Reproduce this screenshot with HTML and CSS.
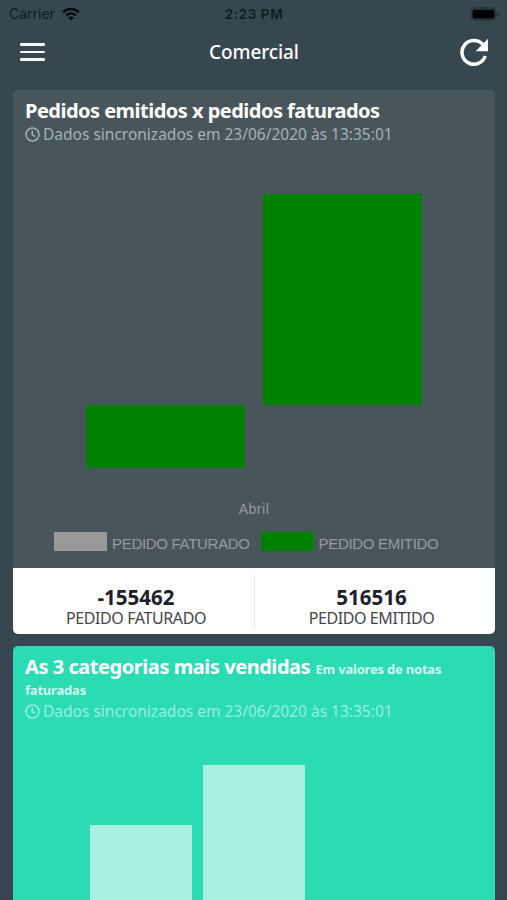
FILE: index.html
```html
<!DOCTYPE html>
<html lang="pt-BR">
<head>
	<meta charset="UTF-8">
	<title>Comercial</title>
	<link rel="stylesheet" href="styles.css">
</head>
<body>
	<div class="app">
		<div class="status">
			<div class="carrier">
				<span>Carrier</span>
				<svg width="18" height="14" viewBox="0 0 18 14">
					<path d="M1.2 5.2a11.2 11.2 0 0 1 15.6 0" fill="none" stroke="#050b0f" stroke-width="2.6"/>
					<path d="M4.2 8.3a7 7 0 0 1 9.6 0" fill="none" stroke="#050b0f" stroke-width="2.3"/>
					<path d="M9 13.6L6.3 10.8a4 4 0 0 1 5.4 0z" fill="#050b0f"/>
				</svg>
			</div>
			<b class="time">2:23 PM</b>
			<svg class="battery" width="30" height="14" viewBox="0 0 30 14">
				<rect x="0.8" y="0.8" width="25.4" height="12.4" rx="4" fill="#2f3b41" stroke="#26323a"/>
				<rect x="2.5" y="2.7" width="22" height="8.8" rx="2" fill="#000"/>
				<path d="M27.7 4.5v5q1.8-.8 1.8-2.5t-1.8-2.5z" fill="#26323a"/>
			</svg>
		</div>
		<div class="navbar">
			<a href="#" class="menu"><i></i><i></i><i></i></a>
			<h1>Comercial</h1>
			<a href="#" class="refresh">
				<svg width="28" height="28" viewBox="0 0 28 28">
					<path d="M25.2 18A11.9 11.9 0 1 1 22.6 6.2" fill="none" stroke="#fff" stroke-width="3.5"/>
					<path d="M28 .8v12.4H15.6z" fill="#fff"/>
				</svg>
			</a>
		</div>

		<div class="card card-gray">
			<div class="card-head">
				<h2><span class="t1">Pedidos emitidos x pedidos faturados</span></h2>
				<p class="sync">
					<svg width="15" height="15" viewBox="0 0 15 15" fill="none" stroke="currentColor" stroke-width="1.5">
						<circle cx="7.5" cy="7.5" r="6.5"/>
						<path d="M7.3 3.5v4.4l3 1.7"/>
					</svg>
					<span>Dados sincronizados em 23/06/2020 às 13:35:01</span>
				</p>
			</div>
			<div class="chart">
				<div class="bar faturado"></div>
				<div class="bar emitido"></div>
			</div>
			<div class="axis">Abril</div>
			<div class="legend">
				<i class="box gray"></i><span class="l1">PEDIDO FATURADO</span>
				<i class="box green"></i><span class="l2">PEDIDO EMITIDO</span>
			</div>
			<div class="totals">
				<div class="total">
					<b>-155462</b>
					<span>PEDIDO FATURADO</span>
				</div>
				<div class="total">
					<b>516516</b>
					<span>PEDIDO EMITIDO</span>
				</div>
			</div>
		</div>

		<div class="card card-teal">
			<div class="card-head">
				<h2><span class="t2">As 3 categorias mais vendidas</span> <small>Em valores de notas faturadas</small></h2>
				<p class="sync">
					<svg width="15" height="15" viewBox="0 0 15 15" fill="none" stroke="currentColor" stroke-width="1.5">
						<circle cx="7.5" cy="7.5" r="6.5"/>
						<path d="M7.3 3.5v4.4l3 1.7"/>
					</svg>
					<span>Dados sincronizados em 23/06/2020 às 13:35:01</span>
				</p>
			</div>
			<div class="chart-top">
				<div class="col first"></div>
				<div class="col second"></div>
			</div>
		</div>
	</div>
</body>
</html>
```

FILE: styles.css
```css
*{
	margin: 0;
	padding: 0;
	box-sizing: border-box;
}
body{
	background-color: #37474f;
	font-family: "Noto Sans", "Open Sans", sans-serif;
}
svg{
	display: block;
}
.app{
	height: 900px;
	overflow: hidden;
	display: flex;
	flex-direction: column;
}
.status{
	flex: none;
	height: 27px;
	padding: 0 7px 0 9px;
	display: grid;
	grid-template-columns: 1fr auto 1fr;
	align-items: center;
	font-family: Inter, "Liberation Sans", sans-serif;
	font-size: 14px;
	color: #111b21;
}
.carrier{
	display: flex;
	align-items: center;
	gap: 7px;
}
.time{
	margin-right: 1px;
	font-size: 13.5px;
	font-weight: 600;
	letter-spacing: 0.6px;
}
.battery{
	justify-self: end;
}
.navbar{
	flex: none;
	height: 63px;
	padding: 0 19px 13px 20px;
	display: grid;
	grid-template-columns: 1fr auto 1fr;
	align-items: center;
}
.navbar h1{
	font-size: 19px;
	font-weight: 500;
	letter-spacing: -0.1px;
	color: #fff;
}
.menu{
	width: 25px;
	display: flex;
	flex-direction: column;
	gap: 5px;
}
.menu i{
	height: 2.6px;
	border-radius: 1px;
	background-color: #f4f6f8;
}
.refresh{
	justify-self: end;
}
.card{
	flex: none;
	width: 482px;
	margin-left: 13px;
	border-radius: 5px;
	overflow: hidden;
}
.card-gray{
	height: 544px;
	margin-bottom: 12px;
	background-color: #48565b;
}
.card-teal{
	height: 300px;
	background-color: #2bdbb4;
}
.card-head{
	padding: 9px 12px 0;
}
.card-head h2{
	font-size: 20px;
	font-weight: 700;
	line-height: 24px;
	color: #fff;
}
.card-teal h2{
	height: 44px;
	line-height: 20px;
}
.card-teal .card-head{
	padding-top: 11px;
}
.card-head small{
	font-size: 13px;
	line-height: 17px;
	letter-spacing: -0.2px;
	color: #d0f8ef;
}
.sync{
	height: 23px;
	display: flex;
	align-items: center;
	gap: 3px;
	font-size: 15.5px;
	line-height: 23px;
	white-space: nowrap;
	color: #a4b1b5;
}
.card-teal .sync{
	height: 21px;
	line-height: 21px;
	color: #98efdb;
}
.t1{
	letter-spacing: -0.52px;
}
.t2{
	letter-spacing: -0.45px;
}
.chart{
	height: 342px;
	padding: 48px 73px 0;
	display: flex;
	gap: 18px;
	border-bottom: 1px solid #435156;
}
.bar{
	width: 159px;
	background-color: #008000;
}
.faturado{
	height: 63px;
	margin-top: 211px;
}
.emitido{
	height: 211px;
}
.axis{
	height: 42px;
	font-family: "Liberation Sans", Arial, sans-serif;
	font-size: 14px;
	letter-spacing: 0.5px;
	line-height: 42px;
	text-align: center;
	color: #969a9b;
}
.legend{
	height: 38px;
	padding: 2px 0 0 41px;
	display: flex;
	align-items: flex-start;
	font-family: "Liberation Sans", Arial, sans-serif;
	font-size: 15px;
	letter-spacing: -0.3px;
	line-height: 23px;
	white-space: nowrap;
	color: #969a9b;
}
.box{
	flex: none;
	width: 53px;
	height: 19px;
	margin-right: 5px;
}
.gray{
	background-color: #9a9899;
}
.green{
	background-color: #008000;
}
.l1{
	width: 148.5px;
}
.totals{
	height: 66px;
	padding: 6px 0;
	display: grid;
	grid-template-columns: 241px 241px;
	background-color: #fff;
}
.total{
	padding: 11px 0 0 5px;
	text-align: center;
}
.total + .total{
	padding-left: 0;
	padding-right: 7px;
	border-left: 1px solid #e9e9eb;
}
.total b{
	display: block;
	font-size: 20.5px;
	line-height: 24px;
	color: #20202a;
}
.total span{
	display: block;
	font-size: 16px;
	letter-spacing: -0.4px;
	line-height: 18px;
	color: #45454b;
}
.chart-top{
	padding: 43px 0 0 76.5px;
	display: flex;
	gap: 11px;
}
.col{
	width: 102px;
	background-color: #aaf0e1;
}
.first{
	height: 140px;
	margin-top: 60px;
}
.second{
	height: 200px;
}
```
